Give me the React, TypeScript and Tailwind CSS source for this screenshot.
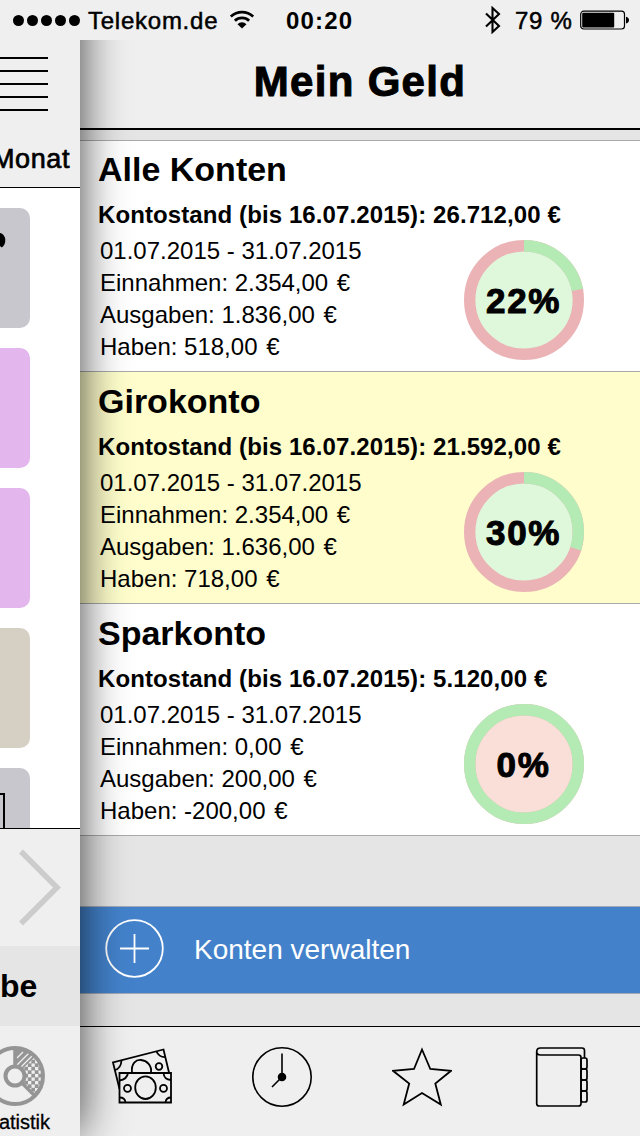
import React from "react";

type Account = {
  name: string;
  balance: string;
  income: string;
  expenses: string;
  rest: string;
  percent: number;
  ring: number;
  negative?: boolean;
  selected?: boolean;
};

const accounts: Account[] = [
  {
    name: "Alle Konten",
    balance: "26.712,00 €",
    income: "2.354,00",
    expenses: "1.836,00",
    rest: "518,00",
    percent: 22,
    ring: 22,
  },
  {
    name: "Girokonto",
    balance: "21.592,00 €",
    income: "2.354,00",
    expenses: "1.636,00",
    rest: "718,00",
    percent: 30,
    ring: 30,
    selected: true,
  },
  {
    name: "Sparkonto",
    balance: "5.120,00 €",
    income: "0,00",
    expenses: "200,00",
    rest: "-200,00",
    percent: 0,
    ring: 100,
    negative: true,
  },
];

const StatusBar = () => (
  <div className="flex h-10 shrink-0 items-center bg-[#efefef] pl-[13px]">
    <div className="flex gap-[3px]">
      {[1, 2, 3, 4, 5].map((dot) => (
        <span key={dot} className="size-[11px] rounded-full bg-black" />
      ))}
    </div>
    <span className="ml-2 w-[134px] pt-0.5 text-2xl tracking-[0.75px] [-webkit-text-stroke:0.5px_black]">
      Telekom.de
    </span>
    <svg className="ml-2 h-5 w-6" viewBox="0 0 24 20" fill="none">
      <path d="M0.8 6.6a16 16 0 0 1 22.4 0" stroke="black" strokeWidth="2.8" />
      <path d="M4.9 10.8a10.2 10.2 0 0 1 14.2 0" stroke="black" strokeWidth="2.8" />
      <path d="M7.5 14.2a6.4 6.4 0 0 1 9 0L12 18.6Z" fill="black" />
    </svg>
    <span className="ml-8 w-[70px] pt-0.5 text-2xl font-bold tracking-[1.2px]">00:20</span>
    <svg className="ml-[129px] h-7 w-4" viewBox="0 0 16 28" fill="none" stroke="black" strokeWidth="2.1">
      <path d="M1 7.5 14 20 7.5 26V2L14 8 1 20.5" />
    </svg>
    <span className="ml-[14px] w-[61px] whitespace-nowrap pt-0.5 text-2xl tracking-[0.7px] [-webkit-text-stroke:0.5px_black]">
      79 %
    </span>
    <svg className="ml-1 h-5 w-[50px]" viewBox="0 0 50 20">
      <rect x="0.7" y="1.2" width="43.8" height="17.8" rx="3" fill="none" stroke="black" strokeWidth="1.2" />
      <rect x="2.2" y="2.7" width="32" height="14.8" rx="1" fill="black" />
      <path d="M46 6.8c4 .5 4 6.1 0 6.6Z" fill="black" />
    </svg>
  </div>
);

const Sidebar = () => (
  <aside className="flex w-20 shrink-0 flex-col overflow-hidden bg-white">
    <div className="flex h-[148px] shrink-0 flex-col border-b border-black bg-[#efefef]">
      <div className="mt-[17px] flex w-12 flex-col gap-[11px]">
        {[1, 2, 3, 4, 5].map((line) => (
          <span key={line} className="h-0.5 bg-black" />
        ))}
      </div>
      <div className="mt-8 flex w-[70px] justify-end text-[27px] leading-8 tracking-[0.6px] [-webkit-text-stroke:0.7px_black]">
        Monat
      </div>
    </div>

    <div className="flex h-[640px] shrink-0 flex-col gap-5 overflow-hidden pt-5">
      <div className="h-[120px] w-[30px] shrink-0 rounded-r-[10px] bg-[#c8c7cd]">
        <svg className="h-[120px] w-[30px]" viewBox="0 0 30 120">
          <path d="M0 25C3 25.5 5.300 28.500 5.300 32C5.300 35.500 4 38 1.700 39.500L0 38Z" fill="black" />
        </svg>
      </div>
      <div className="h-[120px] w-[30px] shrink-0 rounded-r-[10px] bg-[#e3b7ee]" />
      <div className="h-[120px] w-[30px] shrink-0 rounded-r-[10px] bg-[#e3b7ee]" />
      <div className="h-[120px] w-[30px] shrink-0 rounded-r-[10px] bg-[#d6cfc4]" />
      <div className="h-[120px] w-[30px] shrink-0 rounded-r-[10px] bg-[#c8c7cd] pt-[25px]">
        <div className="h-[60px] w-[5px] border-t-2 border-r-2 border-black" />
      </div>
    </div>

    <div className="h-[118px] shrink-0 border-t border-black bg-[#efefef]">
      <svg className="h-[117px] w-20" viewBox="0 0 80 117" fill="none">
        <path d="M21 22.5 57 58.5 21 94.5" stroke="#cccccc" strokeWidth="5.5" />
      </svg>
    </div>
    <div className="flex h-20 shrink-0 items-center bg-[#e5e5e5] text-[32px] font-bold">be</div>
    <div className="h-[110px] shrink-0 bg-[#efefef]">
      <svg className="mt-5 h-[60px] w-[45px]" viewBox="0 0 45 60" fill="none">
        <defs>
          <pattern id="checks" width="7" height="7" patternUnits="userSpaceOnUse">
            <rect width="7" height="7" fill="#959595" />
            <rect width="3.3" height="3.3" fill="#efefef" />
            <rect x="3.5" y="3.5" width="3.3" height="3.3" fill="#efefef" />
          </pattern>
        </defs>
        <path d="M15 30V2A28 28 0 0 1 35.5 11Z" fill="#959595" />
        <path d="M15 30 35 11A28 28 0 0 1 34.8 49.8Z" fill="url(#checks)" />
        <path d="M17 12 23 6M17 19 29 7M21 21 32 10" stroke="#efefef" strokeWidth="1.3" />
        <circle cx="15" cy="30" r="28" stroke="#959595" strokeWidth="4" />
        <path d="M15 2V30L35 50" stroke="#959595" strokeWidth="3.5" />
        <circle cx="15" cy="30" r="9.5" fill="#efefef" stroke="#959595" strokeWidth="4" />
      </svg>
      <div className="mt-1 flex w-[50px] justify-end text-xl leading-6 [-webkit-text-stroke:0.3px_black]">
        atistik
      </div>
    </div>
  </aside>
);

const Ring = ({ percent, ring, negative }: { percent: number; ring: number; negative?: boolean }) => (
  <div className="relative flex size-[120px] items-center justify-center">
    <svg className="absolute inset-0 size-[120px] -rotate-90" viewBox="0 0 120 120">
      <circle cx="60" cy="60" r="49.5" fill={negative ? "#f9dfd8" : "#dff7da"} />
      <circle cx="60" cy="60" r="54.3" fill="none" stroke="#ebb3b5" strokeWidth="11.4" />
      <circle
        cx="60"
        cy="60"
        r="54.3"
        fill="none"
        stroke="#b4ebb5"
        strokeWidth="11.4"
        pathLength="100"
        strokeDasharray={`${ring} ${100 - ring}`}
      />
    </svg>
    <span className="relative -ml-px pt-0.5 text-[35px] font-bold tracking-[1.6px] [-webkit-text-stroke:1px_black]">
      {percent}%
    </span>
  </div>
);

const Amount = ({ label, value }: { label: string; value: string }) => (
  <p>
    {label}: {value}
    <span className="ml-0.5"> €</span>
  </p>
);

const AccountRow = ({ account }: { account: Account }) => (
  <div
    className={`flex h-[232px] shrink-0 border-b border-[#a9a9a9] pt-[9px] first:h-[231px] first:pt-2 ${
      account.selected ? "bg-[#fefdcb]" : "bg-white"
    }`}
  >
    <div className="flex w-full flex-col pl-[18px]">
      <h2 className="text-[34px] leading-10 font-bold">{account.name}</h2>
      <p className="mt-2.5 text-2xl leading-8 font-bold tracking-[0.1px] whitespace-nowrap">
        Kontostand (bis 16.07.2015): {account.balance}
      </p>
      <div className="mt-1 flex">
        <div className="w-[366px] pl-0.5 text-2xl leading-8">
          <p>01.07.2015 - 31.07.2015</p>
          <Amount label="Einnahmen" value={account.income} />
          <Amount label="Ausgaben" value={account.expenses} />
          <Amount label="Haben" value={account.rest} />
        </div>
        <div className="pt-[5px]">
          <Ring percent={account.percent} ring={account.ring} negative={account.negative} />
        </div>
      </div>
    </div>
  </div>
);

const MoneyIcon = () => (
  <svg className="h-[60px] w-[60px]" viewBox="0 0 60 60" fill="none" stroke="black" strokeWidth="1.8">
    <path d="M7.5 42 1 15.5 51.5 2.5 57 25.5" />
    <path d="M2.8 23Q9 21.5 9.5 13.5M44.5 4.5Q47 10.5 54 10M20 25.5C19 16.5 24 12.5 29 13C35 13.5 40 18.5 39 25.5" />
    <circle cx="47" cy="19.5" r="3.3" />
    <path d="M7.5 26H59V55.5H7.5Z" fill="#efefef" />
    <path d="M7.5 33.5Q15 32.5 16 26M51.5 26Q52 32.5 59 33M7.5 50.5Q13 50.5 13.5 55.5M53.5 55.5Q54 50.5 59 50.5" />
    <ellipse cx="33.5" cy="40.7" rx="10.3" ry="11.3" />
    <circle cx="15.5" cy="41.3" r="3.5" />
    <circle cx="51.5" cy="41.3" r="3.5" />
  </svg>
);

const ClockIcon = () => (
  <svg className="size-[60px]" viewBox="0 0 60 60" fill="none" stroke="black" strokeWidth="1.6">
    <circle cx="30" cy="30" r="29.2" />
    <path d="M30 6.5V30L20 40" />
    <circle cx="30" cy="30" r="3.5" fill="black" />
  </svg>
);

const StarIcon = () => (
  <svg className="size-[60px]" viewBox="0 0 60 60" fill="none" stroke="black" strokeWidth="1.8">
    <path d="M30 2.5 38.3 22 59 23.8 43.3 36.5 48.8 57.5 30 46 11.7 57.5 17.2 36.5 1 23.8 22 22Z" />
  </svg>
);

const BookIcon = () => (
  <svg className="size-[60px]" viewBox="0 0 60 60" fill="none" stroke="black" strokeWidth="1.7">
    <path d="M4.7 4.5V56.5q0 2.5 2.5 2.5H46.5q2.5 0 2.5-2.5V10.5q0-2.5-2.5-2.5H8.5C3.5 8 3.5 1 8.5 1H50q2.5 0 2.5 2.5V11" />
    <rect x="49" y="11" width="6" height="11" rx="2" />
    <rect x="49" y="22" width="6" height="11" rx="2" />
    <rect x="49" y="33" width="6" height="11" rx="2" />
    <rect x="49" y="44" width="6" height="11" rx="2" />
  </svg>
);

export default function App() {
  return (
    <div className="flex h-[1136px] w-[640px] flex-col overflow-hidden bg-[#efefef] font-['Liberation_Sans',Arial,sans-serif] text-black">
      <StatusBar />
      <div className="flex h-[1096px]">
        <Sidebar />
        <main className="relative flex w-[560px] flex-col overflow-hidden bg-[#e5e5e5]">
          <header className="flex h-[90px] shrink-0 justify-center border-b-2 border-black bg-[#efefef] pt-[18px]">
            <h1 className="text-[42px] leading-[48px] font-bold tracking-[1.3px] [-webkit-text-stroke:1px_black]">
              Mein Geld
            </h1>
          </header>

          <div className="mt-2.5 border-t border-[#a9a9a9]">
            {accounts.map((account) => (
              <AccountRow key={account.name} account={account} />
            ))}
          </div>

          <button
            type="button"
            className="mt-[70px] flex h-[88px] shrink-0 items-center border-y border-[#a0a9b5] bg-[#4382cb] pl-[25px] text-[28px] text-white"
          >
            <svg className="mr-[30px] -mt-1 size-[59px]" viewBox="0 0 59 59" fill="none" stroke="white">
              <circle cx="29.5" cy="29.5" r="28.3" strokeWidth="1.8" />
              <path d="M15 29.5H44M29.5 15V44" strokeWidth="1.8" />
            </svg>
            Konten verwalten
          </button>

          <nav className="mt-8 flex h-[110px] shrink-0 gap-20 border-t border-black bg-[#efefef] pt-5 pl-8">
            <MoneyIcon />
            <ClockIcon />
            <StarIcon />
            <BookIcon />
          </nav>

          {/* shadow of the side panel */}
          <div className="pointer-events-none absolute inset-y-0 left-0 w-16 overflow-hidden">
            <div className="absolute -top-20 bottom-1 -left-20 w-20 shadow-[0_0_46px_rgba(0,0,0,0.75)]" />
          </div>
        </main>
      </div>
    </div>
  );
}
